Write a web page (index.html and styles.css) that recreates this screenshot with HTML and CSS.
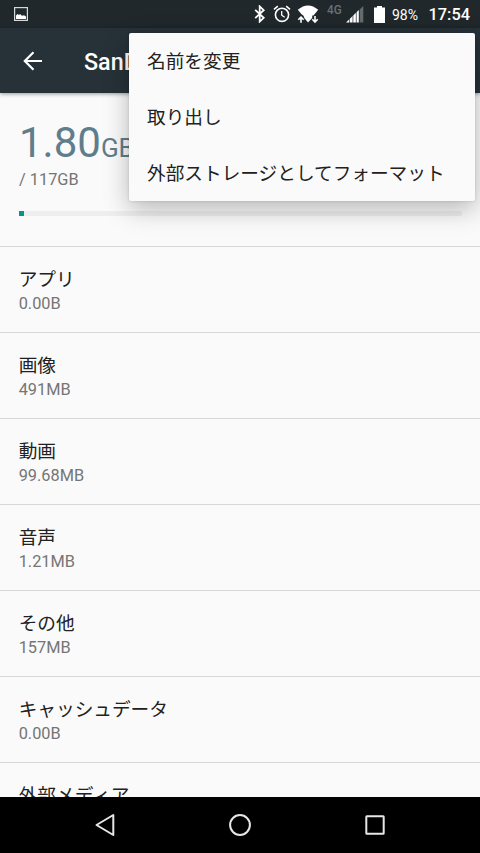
FILE: index.html
```html
<!DOCTYPE html>
<html lang="ja">
<head>
<meta charset="utf-8">
<title>SanDisk</title>
<link rel="stylesheet" href="styles.css">
</head>
<body>
<div class="screen">
  <header class="status-bar">
    <svg class="icon-picture" width="14" height="14" viewBox="0 0 14 14"><rect x=".6" y=".6" width="12.800" height="12.800" fill="none" stroke="#d4d8da" stroke-width="1.200"/><path d="M2 12V8.500L3.500 7l1.500 1 1-1 2 1.800 2-.6 2 1.300V12z" fill="#fff"/></svg>
    <svg class="icon-bluetooth" width="12" height="18" viewBox="0 0 12 18"><path d="M1.200 4.800l8.500 8-4 3.800V1.400l4 3.800-8.500 8" fill="none" stroke="#fff" stroke-width="1.800"/></svg>
    <svg class="icon-alarm" width="18" height="18" viewBox="0 0 18 18"><g fill="none" stroke="#fff" stroke-width="1.600"><circle cx="9" cy="9.800" r="6.600"/><path d="M1 4.400L4.800 1.200M17 4.400l-3.800-3.200"/><path d="M8.700 6v4.200l3 2" stroke-width="1.300"/></g></svg>
    <svg class="icon-wifi" width="22" height="20" viewBox="0 0 22 20"><path d="M.8 5.800Q11-3 21.200 5.800L16.500 11.500h-1.300v2.500L11 18.500l-3.500-4.300L6.500 11.800 4.300 10z" fill="#fff"/><path d="M4 18.700v-5.200M1.300 15.800L4 13.100l2.700 2.700M18 12v5.800M15.300 15.300L18 18l2.700-2.700" fill="none" stroke="#fff" stroke-width="1.600"/></svg>
    <span class="network">4G</span>
    <svg class="icon-signal" width="18" height="17" viewBox="0 0 18 17"><path d="M13.200 4L17.300 0v16.500h-4.100z" fill="#656b6d"/><path d="M0 16.500L12.800 4v12.500z" fill="#fff"/><path d="M3.500 12v5M6.900 8v9M10.300 5v12M13.500 2v15" stroke="#263035" stroke-width=".7"/></svg>
    <svg class="icon-battery" width="11" height="17" viewBox="0 0 11 17"><path d="M3 0h5v1.500h3V17H0V1.500h3z" fill="#fff"/></svg>
    <span class="percent">98%</span>
    <span class="clock">17:54</span>
  </header>
  <div class="toolbar">
    <svg class="icon-back" width="20" height="20" viewBox="0 0 20 20"><path d="M19 10H2M10.500 1.300L1.800 10l8.700 8.700" fill="none" stroke="#fff" stroke-width="2.200"/></svg>
    <h1 class="title">SanDisk</h1>
  </div>
  <main class="content">
    <section class="summary">
      <div class="used">1.80<span class="unit">GB</span></div>
      <div class="total">/ 117GB</div>
      <div class="meter"><div class="meter-fill"></div></div>
    </section>
    <div class="row"><div class="name">アプリ</div><div class="size">0.00B</div></div>
    <div class="row"><div class="name">画像</div><div class="size">491MB</div></div>
    <div class="row"><div class="name">動画</div><div class="size">99.68MB</div></div>
    <div class="row"><div class="name">音声</div><div class="size">1.21MB</div></div>
    <div class="row"><div class="name">その他</div><div class="size">157MB</div></div>
    <div class="row"><div class="name">キャッシュデータ</div><div class="size">0.00B</div></div>
    <div class="row"><div class="name">外部メディア</div></div>
  </main>
  <nav class="nav-bar">
    <svg width="24" height="24" viewBox="0 0 24 24"><path d="M20.300 2v20L3.500 12z" fill="none" stroke="#e6e6e6" stroke-width="2" stroke-linejoin="round"/></svg>
    <svg width="24" height="24" viewBox="0 0 24 24"><circle cx="12" cy="12" r="9.900" fill="none" stroke="#e6e6e6" stroke-width="2"/></svg>
    <svg width="24" height="24" viewBox="0 0 24 24"><rect x="3.300" y="3.300" width="17.400" height="17.400" rx=".5" fill="none" stroke="#e6e6e6" stroke-width="2"/></svg>
  </nav>
  <div class="menu">
    <div class="menu-item">名前を変更</div>
    <div class="menu-item">取り出し</div>
    <div class="menu-item">外部ストレージとしてフォーマット</div>
  </div>
</div>
</body>
</html>
```

FILE: styles.css
```css
* { box-sizing: border-box; }
body { margin: 0; }
svg { display: block; flex: none; }
.screen {
  position: relative;
  display: flex;
  flex-direction: column;
  width: 480px;
  height: 853px;
  overflow: hidden;
  background: #fafafa;
  color: #212121;
  font-family: Roboto, "Noto Sans CJK JP", sans-serif;
}
.status-bar {
  display: flex;
  flex: none;
  align-items: center;
  height: 28px;
  padding: 0 10px 0 14px;
  background: #20282b;
  color: #fff;
}
.icon-bluetooth { margin-left: 226px; }
.icon-alarm { margin-left: 7px; }
.icon-wifi { margin-left: 6px; }
.network {
  width: 17px;
  margin: -9px 0 0 8px;
  color: #697073;
  font-size: 13px;
  font-weight: 500;
  line-height: 14px;
  transform: scaleX(.9);
  transform-origin: left;
}
.icon-signal { margin-left: 2px; }
.icon-battery { margin-left: 10px; }
.percent { margin: 1px 0 0 7px; font-size: 14px; }
.clock { margin: 1px 0 0 auto; font-size: 16.33px; font-weight: 500; }
.toolbar {
  position: relative;
  z-index: 1;
  display: flex;
  flex: none;
  align-items: center;
  height: 65px;
  padding-left: 23px;
  background: #263238;
  box-shadow: 0 1px 4px rgba(0, 0, 0, .4);
  color: #fff;
}
.title { margin: 2px 0 0 41px; font-size: 23.33px; font-weight: 500; }
.content { flex: 1; min-height: 0; overflow: hidden; }
.summary { height: 153px; padding: 25px 18px 0 19px; }
.used {
  height: 50px;
  color: #607d8b;
  font-size: 42px;
  line-height: 50px;
}
.unit { font-size: 26px; }
.total {
  margin-top: 2px;
  color: #757575;
  font-size: 16.33px;
  line-height: 20px;
}
.meter { height: 5px; margin-top: 21px; background: #eee; }
.meter-fill { width: 5px; height: 5px; background: #009688; }
.row { height: 86px; padding: 20px 18px 0 18.67px; border-top: 1px solid #d8d8d8; }
.name { height: 27px; font-size: 18.67px; line-height: 27px; }
.size { color: #757575; font-size: 16.33px; line-height: 20px; }
.nav-bar {
  display: flex;
  flex: none;
  align-items: center;
  justify-content: space-between;
  height: 56px;
  padding: 0 93px;
  background: #000;
}
.menu {
  position: absolute;
  z-index: 2;
  top: 33px;
  left: 129px;
  width: 346px;
  height: 168px;
  padding-top: 1px;
  border-radius: 2px;
  background: #fafafa;
  box-shadow: 0 8px 26px rgba(0, 0, 0, .27), 0 0 3px rgba(0, 0, 0, .15);
}
.menu-item {
  height: 56px;
  padding-left: 18px;
  font-size: 18.67px;
  line-height: 56px;
  white-space: nowrap;
}
```
